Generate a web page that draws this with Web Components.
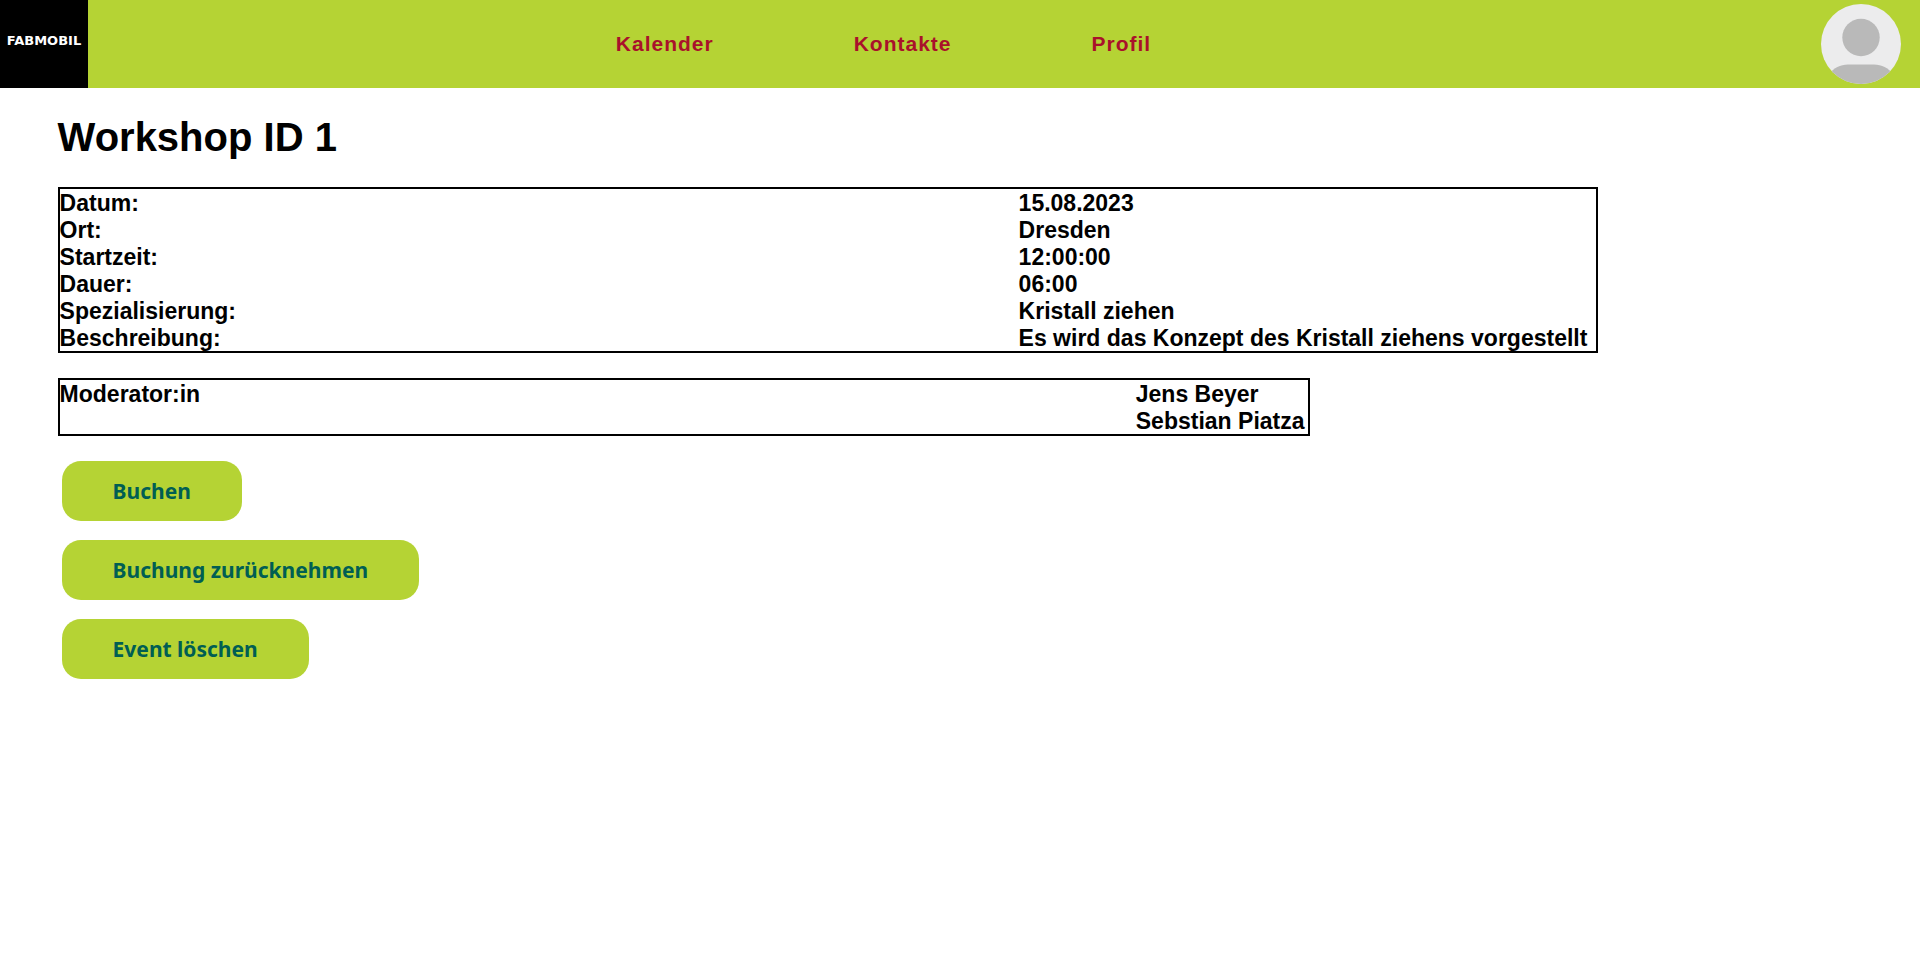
<!DOCTYPE html>
<html lang="de">
<head>
<meta charset="utf-8">
<title>Workshop ID 1</title>
<style>
  body { margin: 0; background: #fff; color: #000; font-family: "Liberation Sans", Arial, sans-serif; }
</style>
</head>
<body>
<fab-header></fab-header>
<workshop-page></workshop-page>

<script>
const define = (name, html) => {
  const template = document.createElement('template');
  template.innerHTML = html;
  customElements.define(name, class extends HTMLElement {
    constructor() {
      super();
      this.attachShadow({ mode: 'open' }).append(template.content.cloneNode(true));
    }
  });
};

define('fab-logo', `
  <style>
    :host { display: block; }
    a { display: flex; align-items: center; justify-content: center; width: 88px; height: 80px; padding-bottom: 8px;
        background: #000; color: #fff; text-decoration: none; font: bold 13px "DejaVu Sans", sans-serif; }
  </style>
  <a href="#">FABMOBIL</a>`);

define('fab-avatar', `
  <style>
    :host { display: block; }
    a, svg { display: block; width: 80px; height: 80px; }
    svg { border-radius: 50%; }
  </style>
  <a href="#" aria-label="Benutzerkonto">
    <svg viewBox="0 0 80 80" aria-hidden="true">
      <rect width="80" height="80" fill="#ececed"/>
      <circle cx="40" cy="33.5" r="18.7" fill="#b9b9b9"/>
      <path d="M8 70C13 64 19 60.5 27 60.5H53C61 60.5 67 64 72 70V80H8Z" fill="#b9b9b9"/>
    </svg>
  </a>`);

define('fab-nav-link', `
  <style>
    :host { display: block; }
    a { color: #a9112b; text-decoration: none; font-size: 21px; font-weight: bold; letter-spacing: 1px; }
  </style>
  <a href="#"><slot></slot></a>`);

define('fab-header', `
  <style>
    :host { display: block; }
    header { display: flex; align-items: center; background: #b5d334; padding-right: 19px; }
    nav { flex: 1; display: flex; justify-content: center; gap: 140px; padding-right: 142px; }
  </style>
  <header>
    <fab-logo></fab-logo>
    <nav>
      <fab-nav-link>Kalender</fab-nav-link>
      <fab-nav-link>Kontakte</fab-nav-link>
      <fab-nav-link>Profil</fab-nav-link>
    </nav>
    <fab-avatar></fab-avatar>
  </header>`);

const tableStyle = `
  :host { display: block; }
  table { border: 2px solid #000; border-spacing: 0; font-size: 23px; line-height: 25px; font-weight: bold; }
  th, td { padding: 2px 0 0; text-align: left; vertical-align: top; white-space: nowrap; }
  th { min-width: var(--label-width); }
  td { min-width: var(--value-width); }
`;

define('workshop-details', `
  <style>${tableStyle}</style>
  <table>
    <tr><th scope="row">Datum:</th><td>15.08.2023</td></tr>
    <tr><th scope="row">Ort:</th><td>Dresden</td></tr>
    <tr><th scope="row">Startzeit:</th><td>12:00:00</td></tr>
    <tr><th scope="row">Dauer:</th><td>06:00</td></tr>
    <tr><th scope="row">Spezialisierung:</th><td>Kristall ziehen</td></tr>
    <tr><th scope="row">Beschreibung:</th><td>Es wird das Konzept des Kristall ziehens vorgestellt</td></tr>
  </table>`);

define('workshop-moderators', `
  <style>${tableStyle}</style>
  <table>
    <tr><th scope="row" rowspan="2">Moderator:in</th><td>Jens Beyer</td></tr>
    <tr><td>Sebstian Piatza</td></tr>
  </table>`);

define('fab-button', `
  <style>
    :host { display: block; }
    button { display: block; height: 60px; margin: 0; padding: 0 51px; border: 0; border-radius: 19px;
             background: #b5d334; color: #005e53; cursor: pointer;
             font: bold 21px "Noto Sans", "Open Sans", sans-serif; }
  </style>
  <button type="button"><slot></slot></button>`);

define('workshop-page', `
  <style>
    :host { display: block; }
    main { padding: 26px 0 26px 3vw; }
    h1 { margin: 0 0 27px; font-size: 40px; line-height: 46px; }
    workshop-details { --label-width: calc(50vw - 1px); --value-width: 577px; margin-bottom: 25px; }
    workshop-moderators { --label-width: calc(56vw + 1px); --value-width: 172px; margin-bottom: 25px; }
    .actions { display: flex; flex-direction: column; align-items: flex-start; gap: 19px; padding-left: 4px; }
  </style>
  <main>
    <h1>Workshop ID 1</h1>
    <workshop-details></workshop-details>
    <workshop-moderators></workshop-moderators>
    <div class="actions">
      <fab-button>Buchen</fab-button>
      <fab-button>Buchung zurücknehmen</fab-button>
      <fab-button>Event löschen</fab-button>
    </div>
  </main>`);
</script>
</body>
</html>
